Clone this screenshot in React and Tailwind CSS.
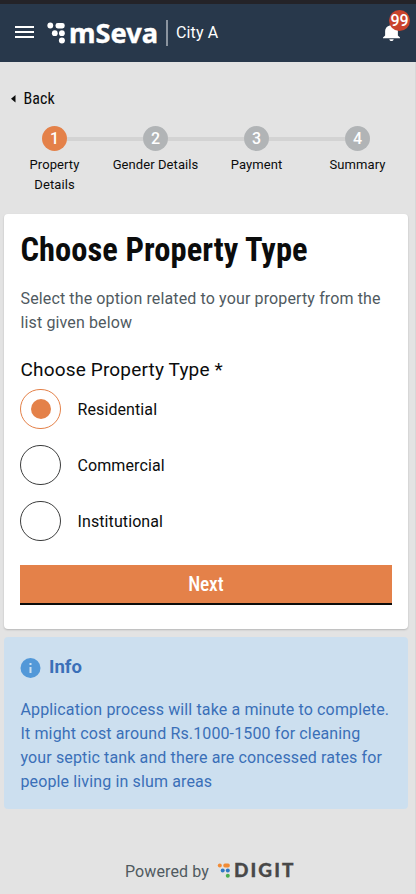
import React from "react";

const steps = ["Property Details", "Gender Details", "Payment", "Summary"];
const options = ["Residential", "Commercial", "Institutional"];

function Header() {
  return (
    <header className="flex h-[62px] items-center border-t-4 border-[#242328] bg-[#28384b] pl-[15px] pr-[14px] text-white">
      <svg width="19" height="14" viewBox="0 0 19 14" fill="white" className="-mt-[2px] shrink-0">
        <path d="M0 1h19v2H0zM0 6h19v2H0zM0 11h19v2H0z" />
      </svg>
      <svg width="112" height="40" viewBox="0 -5 112 40" fill="white" className="ml-[13px] shrink-0 overflow-visible">
        <circle cx="3.300" cy="7.500" r="2.900" />
        <rect x="8.500" y="5" width="9.200" height="5.400" rx="2.300" />
        <circle cx="7.800" cy="15.200" r="2.900" />
        <circle cx="14.900" cy="15.200" r="2.900" />
        <circle cx="14.900" cy="22.600" r="3" />
        <text x="22" y="25" textLength="89" lengthAdjust="spacingAndGlyphs" fontFamily="'Noto Sans', sans-serif" fontWeight="700" fontSize="26" stroke="white" strokeWidth="0.400">mSeva</text>
      </svg>
      <div className="ml-[7px] h-[26px] w-[2px] bg-[#8b949f]" />
      <span className="ml-[8px] text-[16px] leading-6 tracking-[0.15px]">City A</span>
      <div className="relative ml-auto h-[32px] w-[18px]">
        <svg width="17" height="18" viewBox="4 2 16 20" preserveAspectRatio="none" fill="white" className="ml-[-1px] mt-[6px]">
          <path d="M12 22c1.1 0 2-.9 2-2h-4c0 1.100.9 2 2 2zm6-6v-5c0-3.070-1.640-5.640-4.500-6.320V4c0-.83-.67-1.500-1.500-1.500s-1.500.67-1.500 1.500v.68C7.630 5.360 6 7.920 6 11v5l-2 2v1h16v-1l-2-2z" />
        </svg>
        <span className="absolute left-[5px] top-[-7px] flex size-[21px] items-center justify-center rounded-full bg-[#c9432d] text-[16px] font-medium leading-none">99</span>
      </div>
    </header>
  );
}

function Stepper() {
  return (
    <div className="grid h-[88px] grid-cols-4">
      {steps.map((s, i) => (
        <div key={s} className="flex flex-col items-center">
          <div className="flex w-full items-center">
            <div className={`h-[4px] flex-1 ${i > 0 ? "bg-[#d3d3d3]" : ""}`} />
            <div className={`flex size-[25px] items-center justify-center rounded-full text-[16px] font-medium leading-none text-white ${i === 0 ? "bg-[#e48149]" : "bg-[#b1b4b6]"}`}>{i + 1}</div>
            <div className={`h-[4px] flex-1 ${i < 3 ? "bg-[#d3d3d3]" : ""}`} />
          </div>
          <span className={`mt-[4px] text-center text-[13px] leading-5 tracking-[0.08px] text-[#0b0c0c] ${i === 0 ? "w-[60px]" : "whitespace-nowrap"}`}>{s}</span>
        </div>
      ))}
    </div>
  );
}

export default function App() {
  return (
    <div className="h-[894px] w-[416px] overflow-hidden bg-[#e3e3e3] font-['Roboto',sans-serif] text-[#0b0c0c]">
      <Header />
      <div className="h-[832px] border-r border-[#d8d8d8]">
        <main className="ml-[4px] w-[404px]">
          <div className="flex h-[64px] items-start pt-[25px]">
            <svg width="5" height="8" viewBox="0 0 5 8" className="ml-[7px] mt-[8px]">
              <path d="M4.500 0v7.500L0 3.750z" fill="#0b0c0c" />
            </svg>
            <span className="ml-[7.500px] font-['Roboto_Condensed','Roboto',sans-serif] text-[16px] leading-6 tracking-[0.1px] font-stretch-75%">Back</span>
          </div>
          <Stepper />
          <section className="h-[415px] rounded-[4px] bg-white px-[16px] pt-[16px] shadow-[0_1px_2px_rgba(0,0,0,0.2)]">
            <h1 className="h-[40px] whitespace-nowrap pl-[0.500px] font-['Roboto_Condensed','Roboto',sans-serif] text-[32.500px] font-bold leading-[40px] tracking-[0.05px] font-stretch-75%">Choose Property Type</h1>
            <p className="mt-[17px] whitespace-nowrap pl-[0.500px] text-[16px] leading-6 tracking-[0.13px] text-[#505a5f]">
              Select the option related to your property from the
              <br />
              list given below
            </p>
            <h2 className="mt-[23px] pl-[0.500px] text-[19px] leading-6 tracking-[0.17px]">Choose Property Type *</h2>
            <div className="mt-[7px] flex flex-col gap-4">
              {options.map((o, i) => (
                <div key={o} className="flex h-[40px] items-center">
                  <div className={`flex h-[40px] w-[41px] items-center justify-center rounded-full border ${i === 0 ? "border-[#e48149]" : "border-[#3c3d3d]"}`}>
                    {i === 0 && <div className="size-[20px] rounded-full bg-[#e48149]" />}
                  </div>
                  <span className="ml-[16.500px] pt-[2px] text-[16px] leading-6 tracking-[0.1px]">{o}</span>
                </div>
              ))}
            </div>
            <button className="mt-[24px] block h-[40px] w-[371.500px] border-b-2 border-[#0b0c0c] bg-[#e48149] pt-[2px] font-['Roboto_Condensed','Roboto',sans-serif] text-[19.500px] font-medium tracking-[-0.150px] text-white font-stretch-75%">Next</button>
          </section>
          <section className="mt-[8px] h-[172px] rounded-[4px] bg-[#ccdfef] px-[16px] pt-[18px] text-[#3a6fb8]">
            <div className="flex items-center">
              <svg width="21" height="20" viewBox="0 0 20 20" className="mt-[2px]">
                <circle cx="10" cy="10" r="10" fill="#5298d8" />
                <path d="M9 5h2v2H9zM9 9h2v6H9z" fill="#ccdfef" />
              </svg>
              <h3 className="ml-[8px] text-[18.500px] font-bold leading-6">Info</h3>
            </div>
            <p className="mt-[19px] whitespace-nowrap pl-[0.500px] text-[16px] leading-6 tracking-[0.13px]">
              Application process will take a minute to complete.
              <br />
              It might cost around Rs.1000-1500 for cleaning
              <br />
              your septic tank and there are concessed rates for
              <br />
              people living in slum areas
            </p>
          </section>
          <footer className="mt-[50px] flex items-center pl-[121px] text-[#505a5f]">
            <span className="pt-[1px] text-[16px] leading-6 tracking-[0.1px]">Powered by</span>
            <svg width="78" height="24" viewBox="0 -3 78 24" className="ml-[8px] overflow-visible">
              <circle cx="2.800" cy="2.500" r="2" fill="#f18b35" />
              <rect x="6.300" y="0.500" width="6.500" height="4" rx="1.700" fill="#f18b35" />
              <circle cx="5.700" cy="7.600" r="2" fill="#2f79c4" />
              <circle cx="10.800" cy="7.600" r="2" fill="#2f79c4" />
              <circle cx="10.800" cy="12.800" r="2" fill="#4bae4f" />
              <text x="17" y="14" textLength="59.500" lengthAdjust="spacing" fontFamily="Lato, sans-serif" fontWeight="900" fontSize="19" fill="#484848" stroke="#484848" strokeWidth="0.300">DIGIT</text>
            </svg>
          </footer>
        </main>
      </div>
    </div>
  );
}
